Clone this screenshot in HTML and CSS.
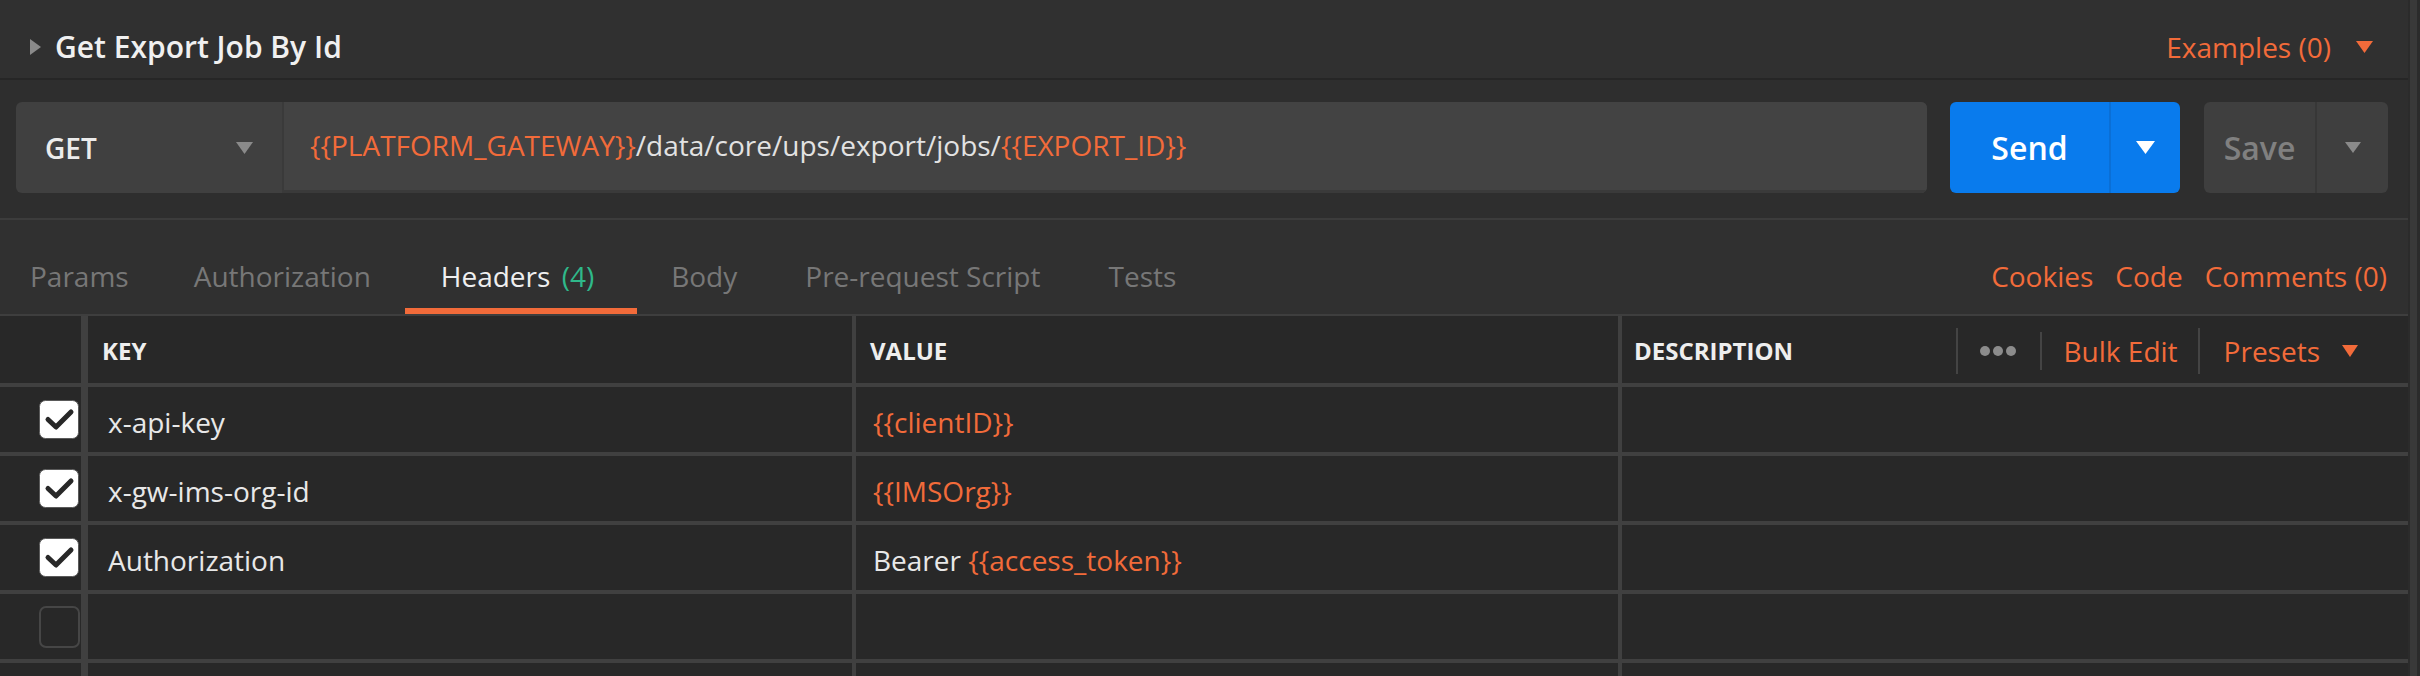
FILE: index.html
```html
<!DOCTYPE html>
<html>
<head>
<meta charset="utf-8">
<link rel="stylesheet" href="styles.css">
</head>
<body>
<div class="page">
  <div class="main">
    <div class="req-header">
      <div class="req-title">
        <svg class="caret-right" width="11" height="16" viewBox="0 0 11 16"><polygon points="0,0 11,8 0,16" fill="#8a8a8a"/></svg>
        <span>Get Export Job By Id</span>
      </div>
      <div class="examples">
        <span>Examples (0)</span>
        <svg width="17" height="12" viewBox="0 0 17 12"><polygon points="0,0 17,0 8.5,12" fill="#f26b3a"/></svg>
      </div>
    </div>

    <div class="url-area">
      <div class="url-bar">
        <div class="method">
          <span>GET</span>
          <svg width="17" height="12" viewBox="0 0 17 12"><polygon points="0,0 17,0 8.5,12" fill="#8a8a8a"/></svg>
        </div>
        <div class="url-input"><span class="var">{{PLATFORM_GATEWAY}}</span>/data/core/ups/export/jobs/<span class="var">{{EXPORT_ID}}</span></div>
      </div>
      <div class="btn send">
        <div class="btn-main">Send</div>
        <div class="btn-split"><svg width="19" height="13" viewBox="0 0 19 13"><polygon points="0,0 19,0 9.5,13" fill="#ffffff"/></svg></div>
      </div>
      <div class="btn save">
        <div class="btn-main">Save</div>
        <div class="btn-split"><svg width="16" height="11" viewBox="0 0 16 11"><polygon points="0,0 16,0 8,11" fill="#8a8a8a"/></svg></div>
      </div>
    </div>

    <div class="tabs">
      <div class="tab-list">
        <div class="tab first">Params</div>
        <div class="tab">Authorization</div>
        <div class="tab active">Headers <span class="count">(4)</span></div>
        <div class="tab">Body</div>
        <div class="tab">Pre-request Script</div>
        <div class="tab">Tests</div>
      </div>
      <div class="tab-links">
        <span>Cookies</span>
        <span>Code</span>
        <span>Comments (0)</span>
      </div>
    </div>

    <div class="table">
      <div class="cell check head"></div>
      <div class="cell head">KEY</div>
      <div class="cell head">VALUE</div>
      <div class="cell head desc">
        <span>DESCRIPTION</span>
        <div class="tools">
          <div class="sep tall"></div>
          <div class="dots"><i></i><i></i><i></i></div>
          <div class="sep"></div>
          <span class="tool-link bulk">Bulk Edit</span>
          <div class="sep tall"></div>
          <span class="tool-link presets">Presets</span>
          <svg width="16" height="12" viewBox="0 0 16 12"><polygon points="0,0 16,0 8,12" fill="#f26b3a"/></svg>
        </div>
      </div>

      <div class="cell check"><svg class="cb" width="40" height="39" viewBox="0 0 40 39"><rect x="0.5" y="0.5" width="39" height="38" rx="6" fill="#ffffff" stroke="#5a5a5a"/><polyline points="9,19.5 17,27 32,12" fill="none" stroke="#282828" stroke-width="5" stroke-linecap="round" stroke-linejoin="round"/></svg></div>
      <div class="cell key">x-api-key</div>
      <div class="cell"><span class="var">{{clientID}}</span></div>
      <div class="cell"></div>

      <div class="cell check"><svg class="cb" width="40" height="39" viewBox="0 0 40 39"><rect x="0.5" y="0.5" width="39" height="38" rx="6" fill="#ffffff" stroke="#5a5a5a"/><polyline points="9,19.5 17,27 32,12" fill="none" stroke="#282828" stroke-width="5" stroke-linecap="round" stroke-linejoin="round"/></svg></div>
      <div class="cell key">x-gw-ims-org-id</div>
      <div class="cell"><span class="var">{{IMSOrg}}</span></div>
      <div class="cell"></div>

      <div class="cell check"><svg class="cb" width="40" height="39" viewBox="0 0 40 39"><rect x="0.5" y="0.5" width="39" height="38" rx="6" fill="#ffffff" stroke="#5a5a5a"/><polyline points="9,19.5 17,27 32,12" fill="none" stroke="#282828" stroke-width="5" stroke-linecap="round" stroke-linejoin="round"/></svg></div>
      <div class="cell key">Authorization</div>
      <div class="cell">Bearer <span class="var">{{access_token}}</span></div>
      <div class="cell"></div>

      <div class="cell check"><div class="cb-empty"></div></div>
      <div class="cell"></div>
      <div class="cell"></div>
      <div class="cell"></div>

      <div class="cell check"></div>
      <div class="cell"></div>
      <div class="cell"></div>
      <div class="cell"></div>
    </div>
  </div>
  <div class="scrollbar"><div class="track"></div></div>
</div>
</body>
</html>
```

FILE: styles.css
```css
* { box-sizing: border-box; }
html, body {
  margin: 0;
  padding: 0;
  background: #2e2e2e;
  overflow: hidden;
}
body {
  font-family: "Open Sans", "Liberation Sans", sans-serif;
  color: #e6e6e6;
  width: 2420px;
  height: 676px;
}
.page {
  display: flex;
  height: 676px;
}
.main {
  flex: 1;
  min-width: 0;
  display: flex;
  flex-direction: column;
}
.scrollbar {
  width: 12px;
  padding-left: 2px;
  background: #2b2b2b;
  display: flex;
}
.scrollbar .track {
  width: 7px;
  background: #393939;
}
.var { color: #f26b3a; }

/* header */
.req-header {
  height: 80px;
  background: #303030;
  border-bottom: 2px solid #262626;
  display: flex;
  align-items: center;
  justify-content: space-between;
  padding: 15px 35px 0 30px;
}
.req-title {
  display: flex;
  align-items: center;
  font-size: 30px;
  font-weight: 600;
  color: #f0f0f0;
}
.caret-right { margin-right: 14px; }
.examples {
  display: flex;
  align-items: center;
  font-size: 28px;
  color: #f26b3a;
}
.examples svg { margin-left: 25px; }

/* url area */
.url-area {
  display: flex;
  padding: 22px 20px 25px 16px;
  border-bottom: 2px solid #3c3c3c;
  background: #2e2e2e;
  height: 140px;
}
.url-bar {
  flex: 1;
  display: flex;
  height: 91px;
  background: #404040;
  border-radius: 6px;
  overflow: hidden;
}
.method {
  width: 268px;
  display: flex;
  align-items: center;
  justify-content: space-between;
  padding: 0 29px 0 29px;
  font-size: 28px;
  font-weight: 600;
  color: #ececec;
  border-right: 2px solid #3a3a3a;
}
.url-input {
  flex: 1;
  display: flex;
  align-items: center;
  padding: 0 0 3px 26px;
  font-size: 28px;
  color: #e2e2e2;
  background: #434343;
  border-bottom: 3px solid #3a3a3a;
  white-space: pre;
}
.btn {
  display: flex;
  height: 91px;
  border-radius: 6px;
  overflow: hidden;
  font-size: 32px;
  font-weight: 600;
}
.btn-main {
  display: flex;
  align-items: center;
  justify-content: center;
}
.btn-split {
  display: flex;
  align-items: center;
  justify-content: center;
}
.send {
  width: 230px;
  margin-left: 23px;
  background: #097bed;
  color: #ffffff;
}
.send .btn-main { width: 161px; border-right: 2px solid #0a6fd6; }
.send .btn-split { flex: 1; }
.save {
  width: 184px;
  margin-left: 24px;
  background: #3f3f3f;
  color: #808080;
}
.save .btn-main { width: 113px; border-right: 2px solid #373737; }
.save .btn-split { flex: 1; }

/* tabs */
.tabs {
  height: 94px;
  background: #303030;
  display: flex;
  align-items: flex-end;
  justify-content: space-between;
}
.tab-list {
  display: flex;
  align-items: flex-end;
}
.tab {
  font-size: 28px;
  line-height: 38px;
  padding: 0 34px 13px 34px;
  border-bottom: 6px solid transparent;
  color: #777777;
  white-space: nowrap;
}
.tab.first { padding-left: 30px; padding-right: 31px; }
.tab.active {
  color: #efefef;
  border-bottom-color: #f26b3a;
  padding-left: 36px;
  padding-right: 43px;
}
.count { color: #2fb88a; margin-left: 4px; }
.tab-links {
  display: flex;
  gap: 22px;
  font-size: 28px;
  line-height: 38px;
  padding: 0 21px 19px 0;
  color: #f26b3a;
}

/* table */
.table {
  flex: 1;
  display: grid;
  grid-template-columns: 84px 764px 762px 1fr;
  grid-template-rows: 67px repeat(5, 65px);
  gap: 4px;
  background: #404040;
  border-top: 2px solid #3e3e3e;
  overflow: hidden;
}
.cell {
  background: #282828;
  display: flex;
  align-items: center;
  padding-left: 17px;
  padding-top: 4px;
  font-size: 28px;
  color: #e8e8e8;
  white-space: pre;
}
.cell.key { padding-left: 20px; }
.cell.check {
  padding-left: 39px;
  padding-top: 0;
  margin-right: 3px;
}
.cell.head {
  font-size: 24px;
  font-weight: 700;
  color: #eeeeee;
  padding-left: 14px;
  padding-top: 2px;
}
.cell.check.head { padding-left: 0; }
.cell.desc {
  padding-left: 12px;
}
.tools {
  margin-left: auto;
  display: flex;
  align-items: center;
  padding-right: 50px;
  font-weight: 400;
}
.sep {
  width: 2px;
  height: 38px;
  background: #444444;
}
.sep.tall { height: 46px; }
.dots {
  display: flex;
  gap: 3px;
  margin: 0 24px 0 22px;
}
.dots i {
  display: block;
  width: 10px;
  height: 10px;
  border-radius: 50%;
  background: #8c8c8c;
}
.tool-link {
  font-size: 28px;
  color: #f26b3a;
}
.bulk { margin: 0 20px 0 22px; }
.presets { margin: 0 22px 0 24px; }
.cb { display: block; }
.cb-empty {
  width: 41px;
  height: 42px;
  border: 2px solid #464646;
  border-radius: 7px;
}
```
